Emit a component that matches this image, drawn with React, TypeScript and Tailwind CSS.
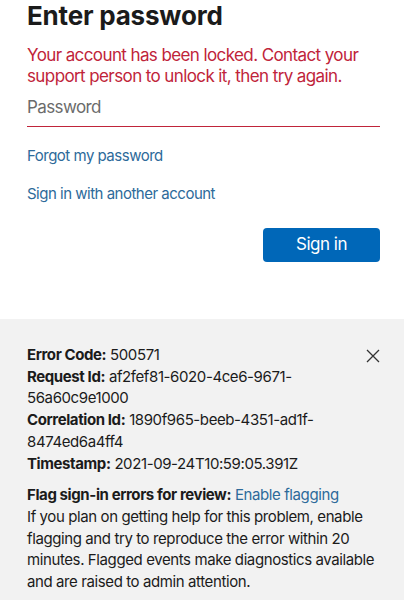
const DETAILS = [
    { label: "Error Code:", value: "500571" },
    { label: "Request Id:", value: "af2fef81-6020-4ce6-9671-56a60c9e1000" },
    { label: "Correlation Id:", value: "1890f965-beeb-4351-ad1f-8474ed6a4ff4" },
    { label: "Timestamp:", value: "2021-09-24T10:59:05.391Z" },
];

export default function App() {
    return (
        <div className="min-h-[600px] bg-white font-['Inter','Liberation_Sans',sans-serif] text-[#1b1b1b]">
            {/* Sign-in form */}
            <div className="pl-[27px] pr-6">
                <h1 className="text-[26px] font-bold leading-8 tracking-[-0.2px] text-[#1b1b1b]">
                    Enter password
                </h1>
                <p className="mt-[13px] text-[17px] leading-[21px] tracking-[-0.6px] text-[#c0243a]">
                    Your account has been locked. Contact your support person to unlock it, then try again.
                </p>
                <div className="mt-[9px] border-b border-[#c0243a] pb-[8px] text-[17px] leading-[22px] tracking-[-0.6px] text-[#6b6b6b]">
                    Password
                </div>
                <div className="mt-[19px] flex flex-col items-start gap-[18px] text-[15px] leading-5 tracking-[-0.5px] text-[#2d6a9a]">
                    <a href="#">Forgot my password</a>
                    <a href="#">Sign in with another account</a>
                </div>
                <div className="mt-6 flex justify-end">
                    <button className="h-[34px] w-[117px] rounded-[4px] bg-[#0067b8] text-[17px] tracking-[-0.5px] text-white">
                        Sign in
                    </button>
                </div>
            </div>

            {/* Error details */}
            <div className="mt-[57px] bg-[#f2f2f2] pb-6 pl-[27px] pr-6 pt-[25px] text-[15px] leading-[21.7px] tracking-[-0.4px]">
                <div className="flex items-start justify-between">
                    <div className="pr-10">
                        {DETAILS.map(({ label, value }) => (
                            <div key={label}>
                                <span className="font-bold">{label}</span> {value}
                            </div>
                        ))}
                    </div>
                    <svg
                        viewBox="0 0 14 14"
                        className="mt-[5px] h-[14px] w-[14px] shrink-0"
                        fill="none"
                        stroke="#333"
                        strokeWidth="1.3"
                    >
                        <path d="M1 1L13 13M13 1L1 13" />
                    </svg>
                </div>
                <p className="mt-[10px]">
                    <span className="font-bold">Flag sign-in errors for review:</span>{" "}
                    <a href="#" className="text-[#2d6a9a]">Enable flagging</a>
                    <br />
                    If you plan on getting help for this problem, enable flagging and try to reproduce the error within 20 minutes. Flagged events make diagnostics available and are raised to admin attention.
                </p>
            </div>
        </div>
    );
}
